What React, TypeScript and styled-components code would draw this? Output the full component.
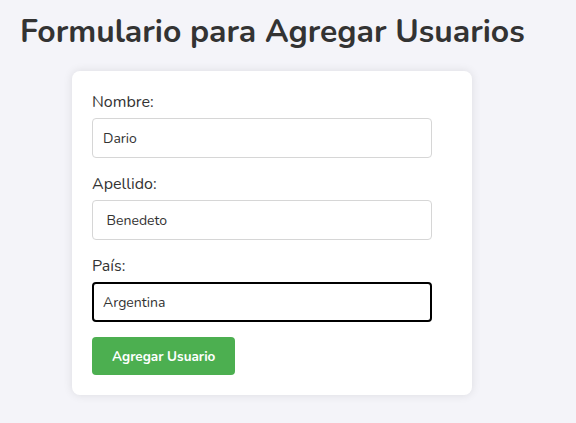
import React from "react";
import styled, { createGlobalStyle } from "styled-components";

const Global = createGlobalStyle`
  html, body { margin: 0; padding: 0; }
  body {
    background: #f4f4f9;
    font-family: "Nunito", Lato, "Open Sans", sans-serif;
    color: #333;
  }
`;

const Page = styled.div`
  padding: 10px 20px 20px 20px;
`;

const Title = styled.h1`
  margin: 0 0 17px 0;
  font-size: 31.9px;
  font-weight: 700;
  line-height: 44px;
  color: #333;
`;

const Card = styled.form`
  width: 400px;
  box-sizing: border-box;
  margin-left: 52px;
  background: #fff;
  border-radius: 8px;
  padding: 20px;
  box-shadow: 0 0 10px rgba(0, 0, 0, 0.1);
  display: flex;
  flex-direction: column;
  align-items: flex-start;
`;

const Label = styled.label`
  display: block;
  font-size: 16px;
  line-height: 22px;
  margin-bottom: 5px;
  color: #333;
`;

const Input = styled.input<{ $focused?: boolean }>`
  width: 340px;
  height: 40px;
  box-sizing: border-box;
  padding: 0 10px;
  margin-bottom: 15px;
  font-family: inherit;
  font-size: 14px;
  color: #333;
  border-radius: 4px;
  outline: none;
  border: ${(p) => (p.$focused ? "2px solid #000" : "1px solid #d6d6d6")};
  padding-left: ${(p) => (p.$focused ? "9px" : "10px")};
`;

const Button = styled.button`
  margin-top: 0;
  background: #4caf50;
  color: #fff;
  border: none;
  border-radius: 4px;
  height: 38px;
  padding: 0 20px;
  font-family: inherit;
  font-size: 13.5px;
  font-weight: 700;
  cursor: pointer;
`;

export default function App() {
  return (
    <Page>
      <Global />
      <Title>Formulario para Agregar Usuarios</Title>
      <Card onSubmit={(e) => e.preventDefault()}>
        <Label htmlFor="nombre">Nombre:</Label>
        <Input id="nombre" defaultValue="Dario" />
        <Label htmlFor="apellido">Apellido:</Label>
        <Input id="apellido" defaultValue=" Benedeto" />
        <Label htmlFor="pais">País:</Label>
        <Input id="pais" defaultValue="Argentina" $focused />
        <Button type="submit">Agregar Usuario</Button>
      </Card>
    </Page>
  );
}
